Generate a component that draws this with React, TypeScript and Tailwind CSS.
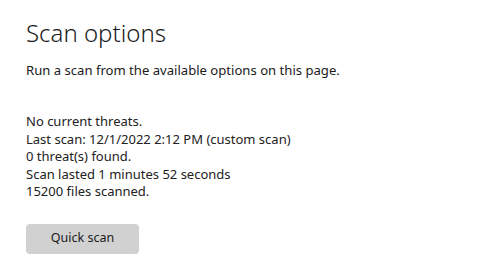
export default function App() {
  return (
    <div
      className="w-[500px] h-[274px] bg-white text-[#1b1b1b] pl-[26px] pt-[17px]"
      style={{ fontFamily: '"Noto Sans", "Open Sans", sans-serif' }}
    >
      <h1 className="text-[24px] font-light leading-[32px]">Scan options</h1>
      <p className="mt-[12px] text-[13.1px] leading-[18px]">
        Run a scan from the available options on this page.
      </p>

      {/* Last scan status */}
      <div className="mt-[34px] text-[13px] leading-[17.5px] text-[#222]">
        <p>No current threats.</p>
        <p>Last scan: 12/1/2022 2:12 PM (custom scan)</p>
        <p>0 threat(s) found.</p>
        <p>Scan lasted 1 minutes 52 seconds</p>
        <p>15200 files scanned.</p>
      </div>

      <button className="mt-[23px] w-[113px] h-[30px] rounded-[4px] bg-[#d1d1d1] text-[12.5px] text-[#1b1b1b]">
        Quick scan
      </button>
    </div>
  );
}
